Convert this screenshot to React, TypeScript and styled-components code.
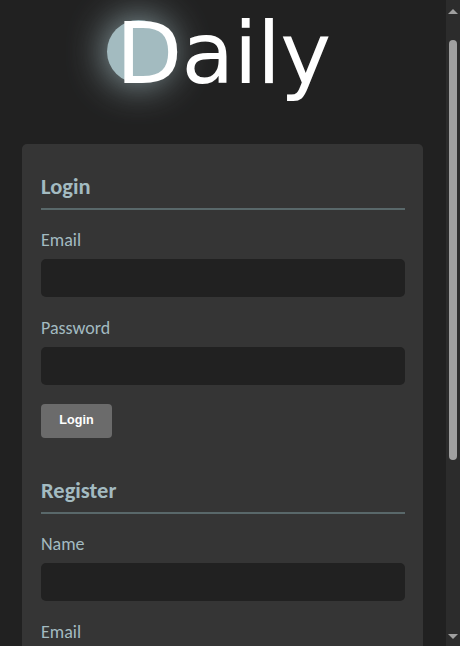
import React from "react";
import styled, { createGlobalStyle } from "styled-components";

const GlobalStyle = createGlobalStyle`
  * { box-sizing: border-box; }
  html, body, #root { height: 100%; }
  body {
    margin: 0;
    overflow: hidden;
    background: #212121;
    color: #a3bbc1;
    font-family: Carlito, Calibri, Lato, sans-serif;
  }
`;

const Window = styled.div`
  display: flex;
  height: 646px;
  overflow: hidden;
`;

const Page = styled.main`
  flex: 1;
  display: flex;
  flex-direction: column;
  overflow: hidden;
`;

const LogoBar = styled.header`
  position: relative;
  flex: none;
  height: 144px;
  padding: 3px 0 0 116px;
`;

const LogoDisc = styled.span`
  position: absolute;
  left: 107px;
  top: 20px;
  width: 63px;
  height: 63px;
  border-radius: 50%;
  background: #a3bbc0;
  box-shadow: 0 0 40px #a3bbc0;
`;

const LogoText = styled.h1`
  position: relative;
  margin: 0;
  color: #fff;
  font: 400 86px/100px "DejaVu Sans", Verdana, sans-serif;
  letter-spacing: -0.6px;
`;

const Card = styled.section`
  flex: none;
  height: 860px;
  margin: 0 23px 0 22px;
  padding: 27px 18px 0 19px;
  border-radius: 5px;
  background: #353535;
`;

const Form = styled.form`
  display: flex;
  flex-direction: column;
  align-items: stretch;
  margin-bottom: 37px;
`;

const Heading = styled.h2`
  height: 39px;
  margin: 0 0 18px;
  border-bottom: 2px solid #59686a;
  font-size: 22.5px;
  font-weight: 700;
  line-height: 32px;
`;

const Field = styled.label`
  display: flex;
  flex-direction: column;
  height: 88px;
  font-size: 18px;
  line-height: 24px;
`;

const Input = styled.input`
  height: 38px;
  margin: 7px 0 0;
  padding: 0 10px;
  border: 0;
  border-radius: 5px;
  background: #212121;
  color: #fff;
`;

const Button = styled.button`
  align-self: flex-start;
  width: 71px;
  height: 34px;
  padding: 0 0 2px;
  border: 0;
  border-radius: 4px;
  background: #6b6b6b;
  color: #fff;
  font: 700 12.6px "Liberation Sans", Arial, sans-serif;
`;

const Scrollbar = styled.aside`
  display: flex;
  flex-direction: column;
  align-items: center;
  width: 14px;
  padding: 9px 0 7px;
  background: #2c2c2c;
`;

const Arrow = styled.svg`
  display: block;
  width: 10px;
  height: 5px;
  fill: #9f9f9f;
`;

const Thumb = styled.div`
  width: 8px;
  height: 420px;
  margin: 26px 0 auto;
  border-radius: 4px;
  background: #9f9f9f;
`;

function FormSection({ title, fields }: { title: string; fields: string[] }) {
  return (
    <Form onSubmit={(e) => e.preventDefault()}>
      <Heading>{title}</Heading>
      {fields.map((name) => (
        <Field key={name}>
          {name}
          <Input type={name === "Password" ? "password" : "text"} />
        </Field>
      ))}
      <Button>{title}</Button>
    </Form>
  );
}

export default function App() {
  return (
    <Window>
      <GlobalStyle />
      <Page>
        <LogoBar>
          <LogoDisc />
          <LogoText>Daily</LogoText>
        </LogoBar>
        <Card>
          <FormSection title="Login" fields={["Email", "Password"]} />
          <FormSection title="Register" fields={["Name", "Email"]} />
        </Card>
      </Page>
      <Scrollbar>
        <Arrow viewBox="0 0 10 5"><path d="M0 5 5 0l5 5z" /></Arrow>
        <Thumb />
        <Arrow viewBox="0 0 10 5"><path d="M0 0h10L5 5z" /></Arrow>
      </Scrollbar>
    </Window>
  );
}
